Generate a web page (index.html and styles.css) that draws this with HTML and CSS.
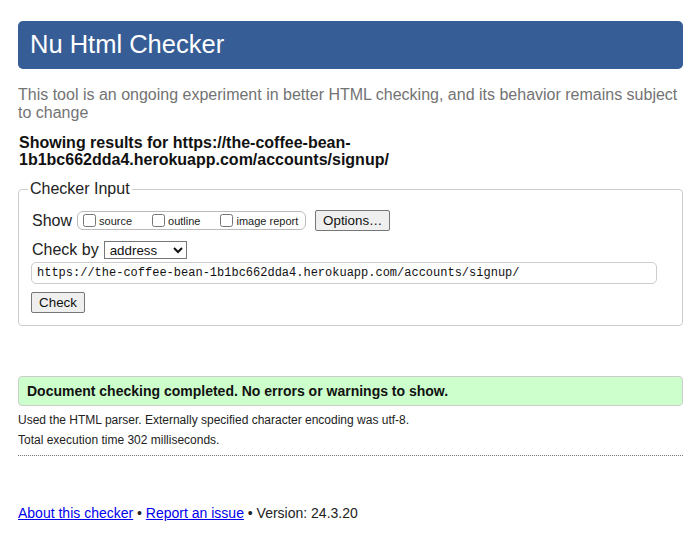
FILE: index.html
```html
<!DOCTYPE html>
<html lang="en">
<head>
<meta charset="utf-8">
<title>Nu Html Checker</title>
<link rel="stylesheet" href="styles.css">
</head>
<body>
<h1 class="title">Nu Html Checker</h1>
<p class="intro">This tool is an ongoing experiment in better HTML checking, and its behavior remains subject to change</p>
<p class="showing">Showing results for https://the-coffee-bean-1b1bc662dda4.herokuapp.com/accounts/signup/</p>
<form class="checker-form">
  <fieldset class="checker">
    <legend class="legend">Checker Input</legend>
    <div class="row row-show">
      <span class="row-label">Show</span>
      <span class="show-group">
        <label class="opt"><input type="checkbox" class="cb">source</label>
        <label class="opt"><input type="checkbox" class="cb">outline</label>
        <label class="opt opt-last"><input type="checkbox" class="cb">image report</label>
      </span>
      <button type="button" class="btn btn-options">Options…</button>
    </div>
    <div class="row row-by">
      <span class="row-label">Check by</span>
      <select class="sel"><option>address</option></select>
    </div>
    <input class="url" type="text" value="https://the-coffee-bean-1b1bc662dda4.herokuapp.com/accounts/signup/">
    <div class="row-check">
      <button type="button" class="btn btn-check">Check</button>
    </div>
  </fieldset>
</form>
<div class="success">Document checking completed. No errors or warnings to show.</div>
<p class="stats stats-first">Used the HTML parser. Externally specified character encoding was utf-8.</p>
<p class="stats">Total execution time 302 milliseconds.</p>
<hr class="sep">
<p class="footer"><a href="#" class="flink">About this checker</a> • <a href="#" class="flink">Report an issue</a> • Version: 24.3.20</p>
</body>
</html>
```
FILE: styles.css
```css
html, body {
  background: #fff;
}
body {
  margin: 0;
  padding: 21px 12px 0 18px;
  width: 665px;
  font-family: "Liberation Sans", Arial, sans-serif;
  color: #222;
}
.title {
  margin: 0;
  height: 48px;
  line-height: 47px;
  padding: 0 12px;
  background: #365d95;
  color: #fff;
  font-size: 25.5px;
  font-weight: normal;
  border-radius: 5px;
}
.intro {
  margin: 17px 0 0;
  font-size: 16px;
  color: #737373;
}
.showing {
  margin: 12px 0 0 1px;
  font-size: 16px;
  line-height: 17px;
  font-weight: bold;
  color: #111;
}
.checker-form {
  margin: 12px 0 0;
}
.checker {
  margin: 0;
  padding: 12px 12px 12px 13px;
  border: 1px solid #ccc;
  border-radius: 4px;
  min-width: 0;
}
.legend {
  margin-left: -4px;
  padding: 0 2px;
  font-size: 16px;
  color: #222;
}
.row {
  display: flex;
  align-items: center;
}
.row-show {
  height: 21px;
}
.row-label {
  font-size: 16px;
  color: #222;
  margin-right: 5px;
}
.show-group {
  display: inline-flex;
  align-items: center;
  height: 17px;
  border: 1px solid #bbb;
  border-radius: 6px;
  padding: 0 7px 0 1px;
}
.opt {
  display: inline-flex;
  align-items: center;
  font-size: 11px;
  color: #222;
  margin-right: 16px;
}
.opt-last {
  margin-right: 0;
}
.cb {
  width: 13px;
  height: 13px;
  margin: 0 3px 0 4px;
}
.btn {
  font-family: "Liberation Sans", Arial, sans-serif;
  font-size: 13.33px;
  color: #111;
  background: #efefef;
  border: 1px solid #767676;
  border-radius: 2px;
  padding: 0 6px;
}
.btn-options {
  margin-left: 9px;
  width: 75px;
  height: 21px;
}
.row-by {
  margin-top: 9px;
  height: 19px;
}
.sel {
  width: 83px;
  height: 18px;
  font-family: "Liberation Sans", Arial, sans-serif;
  font-size: 13.33px;
  color: #111;
  border: 1px solid #767676;
  border-radius: 0;
  background: #fff;
  padding: 0 0 0 1px;
}
.url {
  display: block;
  box-sizing: border-box;
  margin: 3px 0 0 -1px;
  width: 626px;
  height: 22px;
  padding: 0 5px;
  border: 1px solid #ccc;
  border-radius: 5px;
  font-family: "Liberation Mono", "Courier New", monospace;
  font-size: 12px;
  color: #111;
}
.row-check {
  margin-top: 8px;
  margin-left: -1px;
}
.btn-check {
  display: block;
  width: 54px;
  height: 21px;
}
.success {
  margin-top: 50px;
  height: 28px;
  line-height: 28px;
  padding: 0 8px;
  border: 1px solid #ccc;
  border-radius: 4px;
  background: #ccffcc;
  font-size: 14px;
  font-weight: bold;
  color: #111;
}
.stats {
  margin: 6px 0 0;
  font-size: 12px;
  line-height: 14px;
  color: #222;
}
.stats-first {
  margin-top: 7px;
}
.sep {
  margin: 8px 0 0;
  border: 0;
  border-top: 1px dotted #777;
  height: 0;
}
.footer {
  margin: 49px 0 0;
  font-size: 14px;
  line-height: 16px;
  color: #222;
}
.flink {
  color: #0000ee;
  text-decoration: underline;
}
```
